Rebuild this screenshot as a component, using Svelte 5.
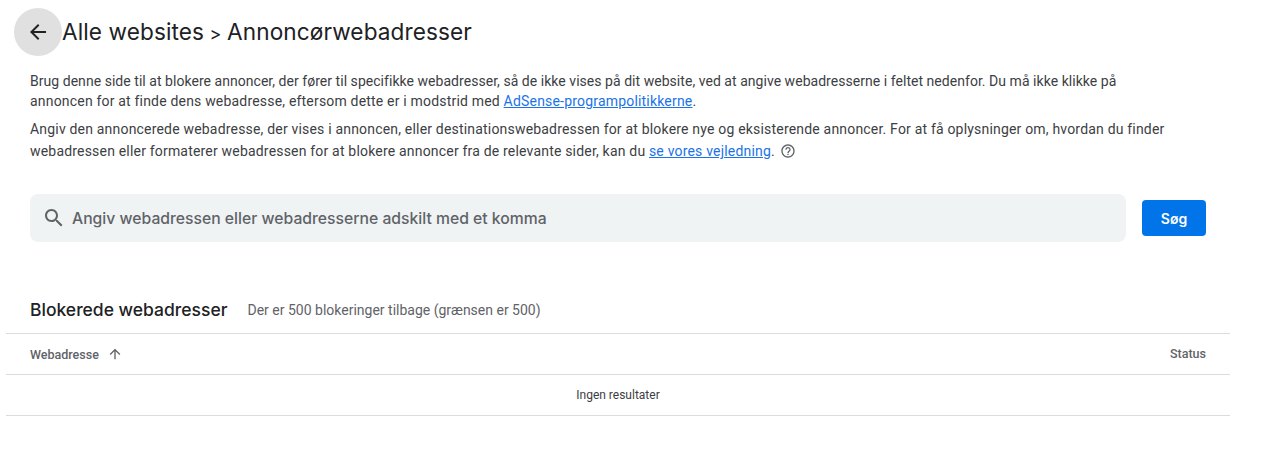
<script>
    const columns = { url: 'Webadresse', status: 'Status' };
</script>

<main>
    <header class="title-row">
        <button class="back" aria-label="Tilbage">
            <svg viewBox="0 0 24 24" width="24" height="24"><path d="M20 11H7.83l5.59-5.59L12 4l-8 8 8 8 1.41-1.41L7.83 13H20v-2z" /></svg>
        </button>
        <h1>Alle websites <span class="sep">&gt;</span> Annoncørwebadresser</h1>
    </header>

    <section class="intro">
        <p class="first">Brug denne side til at blokere annoncer, der fører til specifikke webadresser, så de ikke vises på dit website, ved at angive webadresserne i feltet nedenfor. Du må ikke klikke på <span class="wide">annoncen for at finde dens webadresse, eftersom dette er i modstrid med <a href="#top">AdSense-programpolitikkerne</a>.</span></p>
        <p class="second">Angiv den annoncerede webadresse, der vises i annoncen, eller destinationswebadressen for at blokere nye og eksisterende annoncer. For at få oplysninger om, hvordan du finder webadressen eller formaterer webadressen for at blokere annoncer fra de relevante sider, kan du <a href="#top">se vores vejledning</a>.
            <svg class="help" viewBox="0 0 24 24" width="16" height="16"><path d="M11 18h2v-2h-2v2zm1-16C6.48 2 2 6.48 2 12s4.48 10 10 10 10-4.48 10-10S17.52 2 12 2zm0 18c-4.41 0-8-3.59-8-8s3.59-8 8-8 8 3.59 8 8-3.59 8-8 8zm0-14c-2.21 0-4 1.79-4 4h2c0-1.1.9-2 2-2s2 .9 2 2c0 2-3 1.75-3 5h2c0-2.25 3-2.5 3-5 0-2.21-1.79-4-4-4z" /></svg>
        </p>
    </section>

    <section class="search-row">
        <div class="search">
            <svg viewBox="0 0 24 24" width="24" height="24"><path d="M15.5 14h-.79l-.28-.27C15.41 12.59 16 11.11 16 9.5 16 5.91 13.09 3 9.5 3S3 5.91 3 9.5 5.91 16 9.5 16c1.61 0 3.09-.59 4.23-1.57l.27.28v.79l5 4.99L20.49 19l-4.99-5zm-6 0C7.01 14 5 11.99 5 9.5S7.01 5 9.5 5 14 7.01 14 9.5 11.99 14 9.5 14z" /></svg>
            <span>Angiv webadressen eller webadresserne adskilt med et komma</span>
        </div>
        <button class="submit">Søg</button>
    </section>

    <section class="blocked">
        <div class="blocked-head">
            <h2>Blokerede webadresser</h2>
            <span>Der er 500 blokeringer tilbage (grænsen er 500)</span>
        </div>
        <div class="table-head">
            <div class="sort">
                {columns.url}
                <svg viewBox="0 0 24 24" width="16" height="16"><path d="M4 12l1.41 1.41L11 7.83V20h2V7.83l5.58 5.59L20 12l-8-8-8 8z" /></svg>
            </div>
            <div class="status">{columns.status}</div>
        </div>
        <div class="empty">Ingen resultater</div>
    </section>
</main>

<style>
    :global(body) {
        background: #fff;
    }

    main {
        width: 1224px;
        margin-left: 6px;
        font-family: Roboto, "Liberation Sans", sans-serif;
        color: #3c4043;
    }

    .title-row {
        display: flex;
        align-items: center;
        padding: 8px 0 0 8px;
    }

    .back {
        width: 48px;
        height: 48px;
        border: 0;
        border-radius: 50%;
        background: #e0e0e0;
        display: flex;
        align-items: center;
        justify-content: center;
        padding: 0;
    }

    .back svg {
        fill: #202124;
    }

    h1 {
        margin: 0 0 2px;
        font-family: Inter, sans-serif;
        font-size: 22.6px;
        font-weight: 400;
        letter-spacing: 0.1px;
        color: #202124;
    }

    .sep {
        font-size: 18px;
        margin: 0 -1px;
    }

    .intro {
        padding: 15px 60px 0 24px;
        font-size: 14px;
    }

    .intro p {
        margin: 0;
    }

    .first {
        line-height: 20px;
        letter-spacing: 0.04px;
    }

    .wide {
        letter-spacing: 0.19px;
    }

    .second {
        margin-top: 7px !important;
        line-height: 22px;
        letter-spacing: 0.19px;
    }

    a {
        color: #1a73e8;
        text-decoration: underline;
    }

    .help {
        fill: #5f6368;
        vertical-align: -3px;
        margin-left: 1px;
    }

    .search-row {
        display: flex;
        align-items: center;
        gap: 16px;
        padding: 32px 24px 0;
    }

    .search {
        flex: 1;
        height: 48px;
        border-radius: 8px;
        background: #eff3f4;
        display: flex;
        align-items: center;
        gap: 6px;
        padding-left: 12px;
        color: #5f6368;
        font-family: Inter, sans-serif;
        font-size: 15.73px;
        font-weight: 500;
    }

    .search span {
        margin-top: 1px;
    }

    .search svg {
        fill: #5f6368;
    }

    .submit {
        width: 64px;
        height: 36px;
        border: 0;
        border-radius: 4px;
        background: #0074e8;
        color: #fff;
        font-family: Inter, sans-serif;
        font-size: 14px;
        font-weight: 600;
        padding: 0;
    }

    .blocked {
        margin-top: 50px;
    }

    .blocked-head {
        display: flex;
        align-items: center;
        gap: 20px;
        height: 42px;
        padding: 0 24px 6px;
        box-sizing: border-box;
        border-bottom: 1px solid #dadce0;
    }

    h2 {
        margin: 0;
        font-family: Inter, sans-serif;
        font-size: 17.5px;
        font-weight: 500;
        color: #202124;
    }

    .blocked-head span {
        font-size: 14px;
        color: #5f6368;
    }

    .table-head {
        display: flex;
        align-items: center;
        justify-content: space-between;
        height: 40px;
        padding: 0 24px;
        border-bottom: 1px solid #dadce0;
        font-size: 12.5px;
        font-weight: 500;
        color: #5f6368;
    }

    .sort {
        display: flex;
        align-items: center;
        gap: 8px;
    }

    .sort svg {
        fill: #5f6368;
    }

    .status {
        margin-bottom: 2px;
    }

    .empty {
        height: 40px;
        display: flex;
        align-items: center;
        justify-content: center;
        border-bottom: 1px solid #dadce0;
        font-size: 12px;
    }
</style>
